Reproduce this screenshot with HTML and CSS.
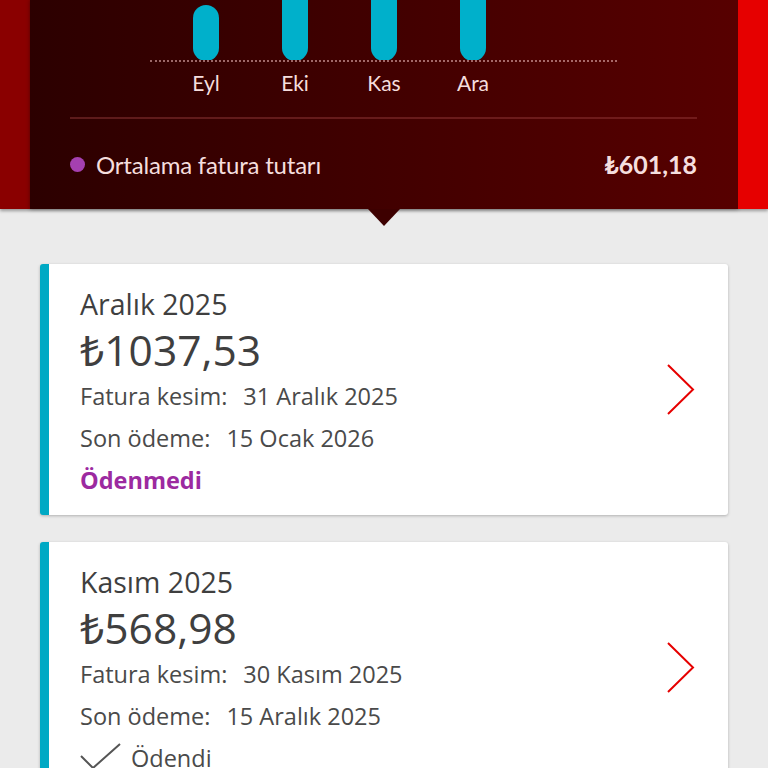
FILE: index.html
```html
<!DOCTYPE html>
<html lang="tr">
<head>
<meta charset="utf-8">
<link rel="stylesheet" href="styles.css">
</head>
<body>
<div class="header">
  <div class="strip strip-left"></div>
  <div class="hmain">
    <div class="chart">
      <div class="bars">
        <div class="col"><div class="bar bar-short"></div></div>
        <div class="col"><div class="bar"></div></div>
        <div class="col"><div class="bar"></div></div>
        <div class="col"><div class="bar"></div></div>
      </div>
      <div class="labels">
        <span class="lbl">Eyl</span>
        <span class="lbl">Eki</span>
        <span class="lbl">Kas</span>
        <span class="lbl">Ara</span>
      </div>
    </div>
    <div class="sep"></div>
    <div class="legend">
      <span class="dot"></span>
      <span class="legend-text">Ortalama fatura tutarı</span>
      <span class="legend-val">₺601,18</span>
    </div>
  </div>
  <div class="strip strip-right"></div>
</div>
<div class="pointer"></div>

<div class="card">
  <div class="card-body">
    <div class="title">Aralık 2025</div>
    <div class="amount">₺1037,53</div>
    <div class="line">Fatura kesim:<span class="val">31 Aralık 2025</span></div>
    <div class="line">Son ödeme:<span class="val">15 Ocak 2026</span></div>
    <div class="status unpaid">Ödenmedi</div>
  </div>
  <svg class="chev" width="29" height="53" viewBox="0 0 29 53"><polyline points="2,2 27,26.5 2,51" fill="none" stroke="#e60000" stroke-width="2"/></svg>
</div>

<div class="card">
  <div class="card-body">
    <div class="title">Kasım 2025</div>
    <div class="amount">₺568,98</div>
    <div class="line">Fatura kesim:<span class="val">30 Kasım 2025</span></div>
    <div class="line">Son ödeme:<span class="val">15 Aralık 2025</span></div>
    <div class="status paid"><svg class="check" width="42" height="30" viewBox="0 0 42 30"><polyline points="1,13 13,25 40,1" fill="none" stroke="#555" stroke-width="2"/></svg>Ödendi</div>
  </div>
  <svg class="chev" width="29" height="53" viewBox="0 0 29 53"><polyline points="2,2 27,26.5 2,51" fill="none" stroke="#e60000" stroke-width="2"/></svg>
</div>
</body>
</html>
```
FILE: styles.css
```css
html, body {
  margin: 0;
  padding: 0;
}
body {
  background: #ebebeb;
  font-family: "Open Sans", "Noto Sans", sans-serif;
  overflow: hidden;
  height: 768px;
}
.header {
  display: flex;
  height: 209px;
  box-shadow: 0 2px 3px rgba(0,0,0,0.35);
  position: relative;
  z-index: 1;
}
.strip {
  width: 30px;
  flex: none;
}
.strip-left { background: #8a0000; }
.strip-right { background: #e60000; }
.hmain {
  flex: 1;
  background: linear-gradient(to right, #2c0000, #570000);
  padding: 0 41px 0 40px;
  font-family: "Lato", sans-serif;
  color: #f5dede;
  box-shadow: 0 0 4px rgba(0,0,0,0.4);
}
.chart {
  margin-left: 80px;
  width: 467px;
}
.bars {
  height: 62px;
  overflow: hidden;
  display: flex;
  align-items: flex-end;
  gap: 63px;
  padding-left: 43px;
  border-bottom: 2px dotted rgba(240, 190, 190, 0.55);
  box-sizing: border-box;
}
.col {
  width: 26px;
  display: flex;
  align-items: flex-end;
}
.bar {
  width: 26px;
  height: 90px;
  border-radius: 13px;
  background: #00b0cb;
  margin-bottom: -1px;
}
.bar-short { height: 56px; }
.labels {
  display: flex;
  gap: 63px;
  padding-left: 43px;
  height: 40px;
  align-items: center;
  font-size: 21px;
}
.lbl {
  width: 26px;
  display: flex;
  justify-content: center;
  white-space: nowrap;
}
.sep {
  height: 2px;
  background: rgba(150, 60, 60, 0.45);
  margin-top: 15px;
}
.legend {
  display: flex;
  align-items: center;
  height: 90px;
  font-size: 24px;
}
.dot {
  width: 15px;
  height: 15px;
  border-radius: 50%;
  background: #a540b0;
  margin: 0 11px 0 0;
}
.legend-text { flex: 1; letter-spacing: -0.2px; }
.legend-val { font-weight: bold; font-size: 25px; }
.pointer {
  width: 0;
  height: 0;
  margin: 0 auto 38px;
  border-top: 17px solid #3d0000;
  border-left: 16px solid transparent;
  border-right: 16px solid transparent;
  position: relative;
  z-index: 2;
}
.card {
  margin: 0 40px 27px;
  background: #fff;
  border-left: 9px solid #00a9c4;
  border-radius: 3px;
  box-shadow: 0 1px 3px rgba(0,0,0,0.25);
  display: flex;
  align-items: center;
  height: 251px;
  box-sizing: border-box;
}
.card-body {
  flex: 1;
  padding: 19px 0 14px 31px;
  color: #3f3f3f;
  align-self: flex-start;
}
.title {
  font-size: 28.5px;
  line-height: 42px;
}
.amount {
  font-size: 42.5px;
  line-height: 50px;
}
.line {
  font-size: 23.5px;
  line-height: 42px;
  color: #4a4a4a;
}
.val { margin-left: 16px; }
.status {
  font-size: 23.5px;
  line-height: 42px;
}
.unpaid {
  color: #9c2aa0;
  font-weight: bold;
}
.paid {
  display: flex;
  align-items: center;
  color: #4a4a4a;
}
.check {
  margin-right: 9px;
}
.chev {
  margin-right: 33px;
  flex: none;
}
```
